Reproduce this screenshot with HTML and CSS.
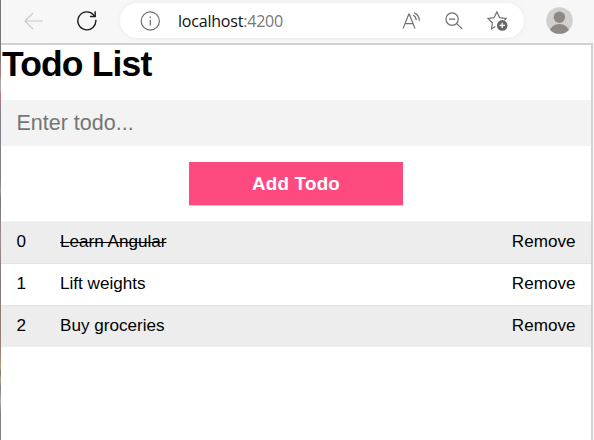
FILE: index.html
```html
<!DOCTYPE html>
<html lang="en">
<head>
<meta charset="utf-8">
<title>Todo List</title>
<link rel="stylesheet" href="styles.css">
</head>
<body>
<div class="edge"></div>
<div class="window">
  <header class="toolbar">
    <svg class="back" width="20" height="18" viewBox="0 0 20 18"><path d="M19 9H1M9 1L1 9l8 8"/></svg>
    <svg class="reload" width="22" height="22" viewBox="0 0 22 22"><path d="M19.8 9.8A9 9 0 1 1 17.6 4.9L19 6.3M19.2 1.3V6.5H14"/></svg>
    <div class="address">
      <svg class="info" width="20" height="20" viewBox="0 0 20 20"><circle cx="10.3" cy="10" r="9.1"/><path d="M10.3 8.8v5.8M10.3 5.5v1.8"/></svg>
      <div class="url">localhost<span class="port">:4200</span></div>
      <svg class="read" width="20" height="18" viewBox="0 0 20 18"><path d="M1 16.6L6.8 2.2h.5L13 16.6M3.2 11.6h7.7M11.1 3.3q3 1.2 3.2 4.8M12.2.9q5 2 5.2 7.8"/></svg>
      <svg class="search" width="18" height="18" viewBox="0 0 18 18"><circle cx="7.1" cy="7.1" r="6.2"/><path d="M4 7.1h6.2M11.6 11.6l5.7 5.4"/></svg>
      <svg class="star" width="22" height="20" viewBox="0 0 22 20"><path d="M8.3 15.6L4.6 17.9l.7-6.2L1 7.5l6-.8 2.9-5.8 2.7 5.8 6.6.8-1.8 1.9"/><circle cx="15.2" cy="14.4" r="5.3"/><path class="plus" d="M12.5 14.4h5.4M15.2 11.7v5.4"/></svg>
    </div>
    <svg class="avatar" width="27" height="27" viewBox="0 0 27 27"><defs><clipPath id="disc"><circle cx="13.5" cy="13.5" r="13.3"/></clipPath></defs><circle class="disc" cx="13.5" cy="13.5" r="13.3"/><g clip-path="url(#disc)"><circle cx="13.4" cy="10.3" r="5.7"/><ellipse cx="13.4" cy="25.3" rx="10" ry="8.2"/></g></svg>
  </header>
  <main class="page">
    <h1>Todo List</h1>
    <input class="entry" type="text" placeholder="Enter todo...">
    <button class="add">Add Todo</button>
    <div class="list">
      <div class="todo"><span class="id">0</span><span class="name done">Learn Angular</span><span class="remove">Remove</span></div>
      <div class="todo"><span class="id">1</span><span class="name">Lift weights</span><span class="remove">Remove</span></div>
      <div class="todo"><span class="id">2</span><span class="name">Buy groceries</span><span class="remove">Remove</span></div>
    </div>
  </main>
</div>
</body>
</html>
```
FILE: styles.css
```css
* { box-sizing: border-box; }
body {
  margin: 0;
  height: 440px;
  display: flex;
  overflow: hidden;
  background: #f7f7f7;
  font-family: "Liberation Sans", Arial, sans-serif;
  color: #000;
}
.edge {
  width: 1px;
  background: linear-gradient(#777 0 60px, #b07a83 64px 76px, #aaa 80px 90px, #b07a83 94px 102px, #808088 108px 180px, #a09890 190px, #777 200px, #a08d8d 240px, #807878 280px, #987f75 350px, #b0a070 368px, #777 372px, #aaa880 380px, #808090 388px, #aaa 402px, #808090 412px 440px);
}
.window { width: 593px; display: flex; flex-direction: column; }
.toolbar {
  height: 43px;
  padding: 0 20px 2px 23px;
  display: flex;
  align-items: center;
}
svg { display: block; flex: none; fill: none; stroke: #707070; stroke-width: 1.2; }
.back { stroke: #c9c9c9; }
.reload { margin-left: 31.6px; margin-right: 0.4px; stroke: #1a1a1a; stroke-width: 1.4; }
.address {
  width: 404px;
  height: 35px;
  margin-left: 22px;
  padding: 0 15px 0 20px;
  display: flex;
  align-items: center;
  border-radius: 18px;
  background: #fff;
  box-shadow: 0 0 5px #e9e9e9;
}
.url {
  flex: 1;
  margin-left: 18px;
  font: 16px/24px "Open Sans", "Noto Sans", sans-serif;
  letter-spacing: -0.2px;
  color: #111;
}
.port { color: #777; }
.search { margin-left: 23px; }
.star { margin-left: 24px; }
.star circle { fill: #666; stroke: none; }
.star .plus { stroke: #fff; stroke-width: 1.3; }
.avatar { margin-left: 22px; fill: #8d8985; stroke: none; }
.avatar .disc { fill: #d2d0cd; }
.page {
  flex: 1;
  width: 592px;
  display: flex;
  flex-direction: column;
  background: #fff;
  border-top: 2px solid #d0d1d0;
  border-right: 2px solid #d0d1d0;
}
h1 { margin: 0; height: 55px; padding-left: 1px; font-size: 35.5px; line-height: 38px; letter-spacing: -0.85px; }
.entry {
  height: 46px;
  padding: 0 15.5px;
  border: 0;
  border-radius: 0;
  background: #f3f3f3;
  font: 21.5px "Liberation Sans", Arial, sans-serif;
}
.entry::placeholder { color: #757575; }
.add {
  align-self: center;
  width: 214px;
  height: 44px;
  margin: 16px 0 15px;
  padding: 1px 0 0;
  border: 0;
  border-bottom: 1px solid #ffb6cc;
  background: #ff4a80;
  color: #fff;
  font: bold 18.8px "Liberation Sans", Arial, sans-serif;
  letter-spacing: 0.25px;
}
.list { border-top: 1px solid #f3f3f3; }
.todo {
  height: 42px;
  padding: 0 15.5px 1px 15.6px;
  display: flex;
  align-items: center;
  border-bottom: 1px solid #e3e3e3;
  font-size: 17.1px;
}
.todo:nth-child(odd) { background: #ededed; }
.todo:last-child { height: 41px; padding-bottom: 0; border-color: #ededed; }
.id { width: 43.4px; }
.name { flex: 1; }
.done { text-decoration: line-through 1px; }
```
